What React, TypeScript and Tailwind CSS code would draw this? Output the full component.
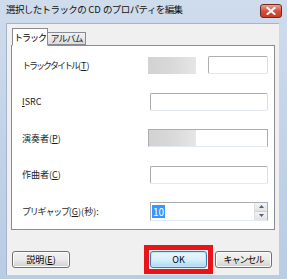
import React from "react";

function U({ c }: { c: string }) {
  return <span className="underline underline-offset-1">{c}</span>;
}

function K({ children, t = "tracking-[-1.5px]" }: { children: React.ReactNode; t?: string }) {
  return <span className={t}>{children}</span>;
}

function Input({ className = "" }: { className?: string }) {
  return (
    <div
      className={
        "h-[18px] bg-white border border-[#abadb3] border-b-[#e3e9ef] border-r-[#dbdfe6] rounded-[2px] " +
        className
      }
    />
  );
}

function Row({ label, children }: { label: React.ReactNode; children: React.ReactNode }) {
  return (
    <div className="flex items-center h-[18px]">
      <div className="w-[126px] text-[9px] leading-none text-[#1e1e1e] whitespace-nowrap">{label}</div>
      <div className="flex-1 flex items-center h-[18px]">{children}</div>
    </div>
  );
}

function Btn({ children, def = false, w }: { children: React.ReactNode; def?: boolean; w: string }) {
  return (
    <div
      className={
        "h-[17px] flex items-center justify-center text-[9px] leading-none rounded-[3px] border whitespace-nowrap " +
        w +
        " " +
        (def
          ? "border-[#3c7fb1] bg-gradient-to-b from-[#eaf6fd] via-[#d9f0fc] to-[#a7d9f5] shadow-[inset_0_0_0_1px_#c0e7fb]"
          : "border-[#707070] bg-gradient-to-b from-[#f2f2f2] via-[#ebebeb] to-[#cfcfcf] shadow-[inset_0_0_0_1px_#fcfcfc]")
      }
    >
      {children}
    </div>
  );
}

export default function App() {
  return (
    <div className="w-[287px] h-[279px] bg-gradient-to-b from-[#cfdcec] via-[#c2d3e8] to-[#b8cce4] flex flex-col font-['Noto_Sans_CJK_JP','Noto_Sans',sans-serif]">
      {/* title bar */}
      <div className="h-[23px] flex items-start pt-[4px] pl-[6px] pr-[5px]">
        <div className="flex-1 flex items-center h-[12px] text-[9.5px] leading-none text-[#111] whitespace-pre">
          <K t="tracking-[-0.6px]">選択したトラックの</K>
          <span> CD </span>
          <K t="tracking-[-0.6px]">のプロパティを編集</K>
        </div>
        <div className="w-[22px] h-[14px] rounded-[3px] border border-[#6b2a23] bg-gradient-to-b from-[#e8a493] via-[#d3503a] to-[#c83c26] flex items-center justify-center">
          <svg width="10" height="8" viewBox="0 0 10 8">
            <path d="M1.5 1 L8.5 7 M8.5 1 L1.5 7" stroke="#fff" strokeWidth="2" strokeLinecap="square" />
          </svg>
        </div>
      </div>
      {/* client area */}
      <div className="ml-[6px] w-[273px] h-[252px] bg-[#f0f0f0] border-t border-l border-[#a6b6c9] flex flex-col pl-[4px]">
        {/* tabs */}
        <div className="flex items-end h-[19px] mt-[3px] pl-[1px] relative z-10">
          <div className="w-[36px] h-[18px] bg-white border border-[#898c95] border-b-white flex items-center justify-center text-[9px] leading-none whitespace-nowrap tracking-[-1px]">
            トラック
          </div>
          <div className="w-[38px] h-[13px] mb-[1px] bg-gradient-to-b from-[#f2f2f2] to-[#dcdcdc] border border-l-0 border-[#898c95] flex items-center justify-center text-[9px] leading-none text-[#222] whitespace-nowrap tracking-[-1px]">
            アルバム
          </div>
        </div>
        {/* panel */}
        <div className="w-[264px] h-[185px] mt-[-1px] bg-white border border-[#898c95] flex flex-col gap-[18.5px] pt-[10px] pl-[10px] pr-[6px]">
          <Row label={<span><K t="tracking-[-2px]">トラック タイトル</K>(<U c="T" />)</span>}>
            <div className="w-[48px] h-[17px] bg-gradient-to-r from-[#d2d2d2] via-[#d9d9d9] to-[#e6e6e6]" />
            <Input className="ml-[12px] flex-1" />
          </Row>
          <Row label={<span><U c="I" />SRC</span>}>
            <Input className="ml-[2px] flex-1" />
          </Row>
          <Row label={<span>演奏者(<U c="P" />)</span>}>
            <div className="flex-1 h-[18px] bg-white border border-[#abadb3] border-b-[#e3e9ef] flex">
              <div className="w-[47px] h-full bg-gradient-to-r from-[#d2d2d2] via-[#d9d9d9] to-[#e6e6e6]" />
            </div>
          </Row>
          <Row label={<span>作曲者(<U c="C" />)</span>}>
            <Input className="ml-[2px] flex-1" />
          </Row>
          <Row label={<span><K t="tracking-[-1.2px]">プリギャップ</K>(<U c="G" />)(秒):</span>}>
            <div className="ml-[2px] flex-1 h-[19px] bg-white border border-[#abadb3] border-b-[#e3e9ef] flex items-center pl-[1px]">
              <span className="bg-[#3399ff] text-white text-[10px] leading-[13px] px-[1px]">10</span>
              <div className="flex-1" />
              <div className="w-[13px] h-full flex flex-col border-l border-[#dfdfdf]">
                <div className="flex-1 bg-gradient-to-b from-[#f4f4f4] to-[#e2e2e2] border-b border-[#cfcfcf] flex items-center justify-center">
                  <svg width="5" height="3" viewBox="0 0 5 3"><path d="M0 3 L2.5 0 L5 3Z" fill="#4d6185" /></svg>
                </div>
                <div className="flex-1 bg-gradient-to-b from-[#f4f4f4] to-[#e2e2e2] flex items-center justify-center">
                  <svg width="5" height="3" viewBox="0 0 5 3"><path d="M0 0 L2.5 3 L5 0Z" fill="#4d6185" /></svg>
                </div>
              </div>
            </div>
          </Row>
        </div>
        {/* buttons */}
        <div className="flex items-center mt-[21px] pl-[1px]">
          <Btn w="w-[58px]">
            <span>説明(<U c="E" />)</span>
          </Btn>
          <div className="ml-[74px] border-[5px] border-[#e8141a] p-[1px] my-[-7px]">
            <Btn def w="w-[57px]">OK</Btn>
          </div>
          <div className="ml-[2px]">
            <Btn w="w-[57px]"><K t="tracking-[-1px]">キャンセル</K></Btn>
          </div>
        </div>
      </div>
    </div>
  );
}
